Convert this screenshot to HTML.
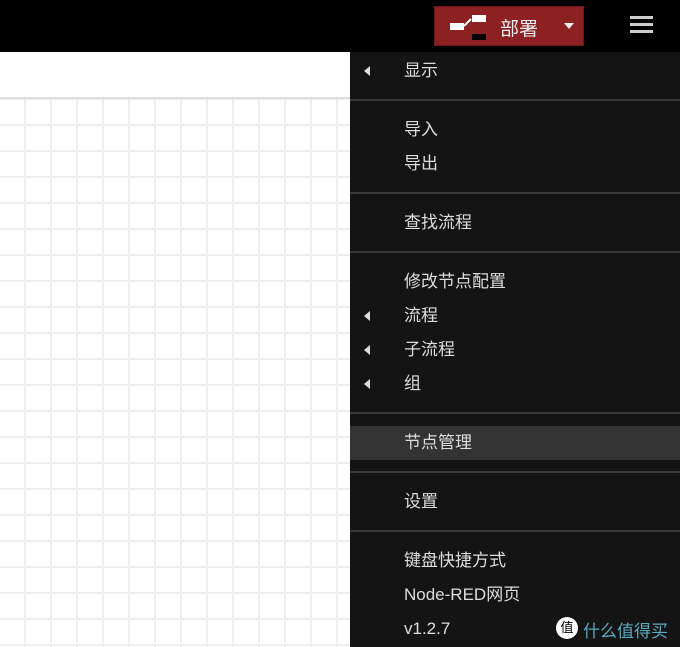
<!DOCTYPE html>
<html><head><meta charset="utf-8"><style>
*{margin:0;padding:0;box-sizing:border-box}
body{width:680px;height:647px;overflow:hidden;background:#fff;font-family:"Liberation Sans","Noto Sans CJK SC",sans-serif;position:relative}
#hdr{position:absolute;left:0;top:0;width:680px;height:52px;background:#000}
#dep{position:absolute;left:434px;top:6px;width:150px;height:40px;background:#8c2022;border:1px solid #6b1618}
#tabs{position:absolute;left:0;top:52px;width:680px;height:47px;background:#fff;border-bottom:2px solid #ddd}
#grid{position:absolute;left:0;top:99px;width:680px;height:548px;
background-image:linear-gradient(to right,#eee 2px,transparent 2px),linear-gradient(to bottom,#eee 2px,transparent 2px);
background-size:26px 26px;background-position:24px 25px}
#menu{position:absolute;left:350px;top:52px;width:330px;height:595px;background:#141414;color:#ddd;font-size:17px}
.it{position:absolute;left:0;width:330px;height:34px;line-height:34px;padding-left:54px}
.ar{position:absolute;left:14px;top:12px;width:0;height:0;border-top:5px solid transparent;border-bottom:5px solid transparent;border-right:6px solid #ddd}
.sep{position:absolute;left:0;width:330px;height:2px;background:#3a3a3a}
</style></head><body>
<div id="hdr">
<div id="dep">
<svg width="60" height="38" style="position:absolute;left:0;top:0">
<rect x="15" y="16" width="14" height="7" fill="#fff"/><path d="M29 19 L36 12" stroke="#fff" stroke-width="2"/><rect x="37" y="8" width="14" height="7" fill="#fff"/><rect x="37" y="27" width="14" height="6" fill="#000"/>
</svg>
<span style="position:absolute;left:65px;top:7px;color:#eee;font-size:19px">部署</span>
<div style="position:absolute;left:129px;top:16px;border-left:5px solid transparent;border-right:5px solid transparent;border-top:6px solid #eee"></div>
</div>
<div style="position:absolute;left:630px;top:16px;width:23px;height:3px;background:#ccc;box-shadow:0 7px 0 #ccc,0 14px 0 #ccc"></div>
</div>
<div id="tabs"></div>
<div id="grid"></div>
<div id="menu">
<div class="it" style="top:2px"><i class="ar"></i>显示</div>
<div class="sep" style="top:47px"></div>
<div class="it" style="top:61px">导入</div>
<div class="it" style="top:95px">导出</div>
<div class="sep" style="top:140px"></div>
<div class="it" style="top:154px">查找流程</div>
<div class="sep" style="top:199px"></div>
<div class="it" style="top:213px">修改节点配置</div>
<div class="it" style="top:247px"><i class="ar"></i>流程</div>
<div class="it" style="top:281px"><i class="ar"></i>子流程</div>
<div class="it" style="top:315px"><i class="ar"></i>组</div>
<div class="sep" style="top:360px"></div>
<div class="it" style="top:374px;background:#333">节点管理</div>
<div class="sep" style="top:419px"></div>
<div class="it" style="top:433px">设置</div>
<div class="sep" style="top:478px"></div>
<div class="it" style="top:492px">键盘快捷方式</div>
<div class="it" style="top:526px">Node-RED网页</div>
<div class="it" style="top:560px">v1.2.7</div>
<div style="position:absolute;left:206px;top:565px;width:22px;height:22px;border-radius:50%;background:#fff;color:#000;font-size:13px;text-align:center;line-height:22px">值</div>
<div style="position:absolute;left:233px;top:565px;color:#5aa9bf;font-size:17px">什么值得买</div>
</div>
</body></html>
